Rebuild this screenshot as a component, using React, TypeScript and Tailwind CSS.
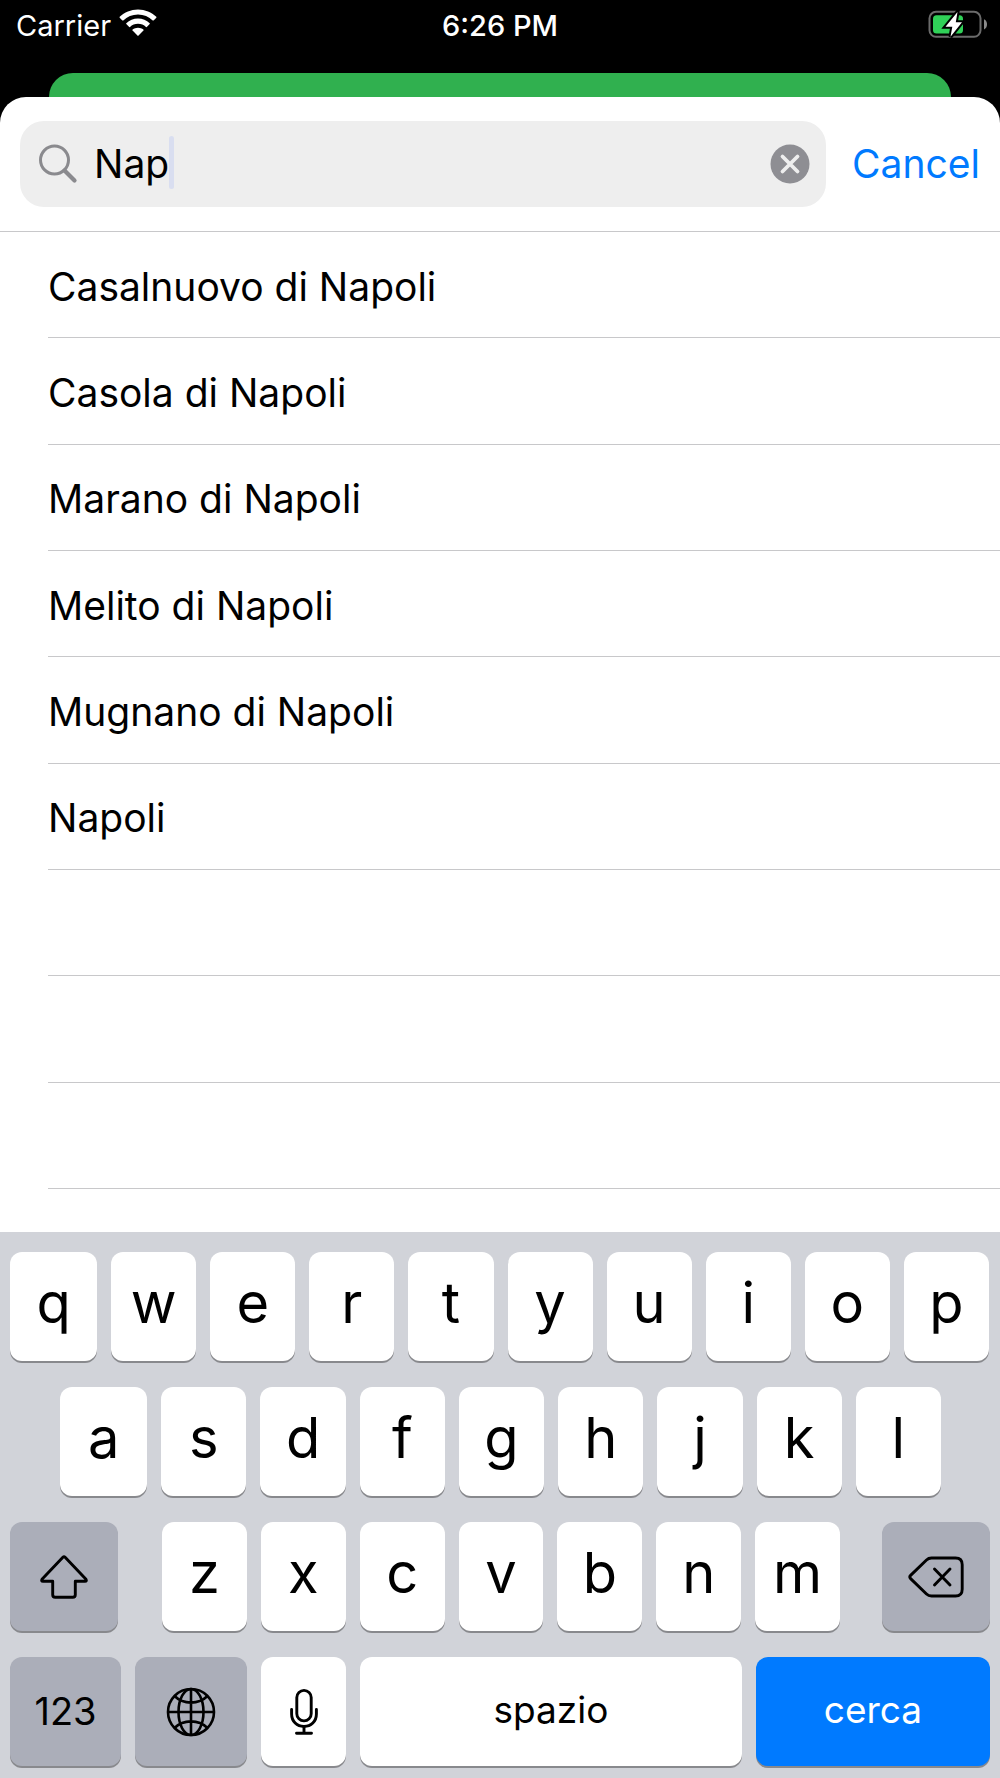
import { useState } from "react";
import type { ReactNode } from "react";

const cities = [
  "Casalnuovo di Napoli",
  "Casola di Napoli",
  "Marano di Napoli",
  "Melito di Napoli",
  "Mugnano di Napoli",
  "Napoli",
  "",
  "",
  "",
];

function WifiIcon() {
  return (
    <svg viewBox="0 0 38 28" className="h-7 w-[38px]" fill="#fff" aria-hidden="true">
      <path d="M19 0.4C11.9 0.4 5.4 3.200 0.700 7.800Q0.300 8.300 0.700 8.700L3.400 11.400Q3.900 11.800 4.300 11.400C8.100 7.700 13.300 5.500 19 5.500S29.900 7.700 33.700 11.400Q34.100 11.800 34.600 11.400L37.300 8.700Q37.700 8.300 37.300 7.800C32.600 3.200 26.100 0.400 19 0.400Z" />
      <path d="M19 9.600C14.500 9.600 10.400 11.400 7.300 14.200Q6.900 14.700 7.300 15.100L10.200 18Q10.600 18.300 11 18C13.100 16 15.900 14.800 19 14.800S24.900 16 27 18Q27.400 18.300 27.800 18L30.700 15.100Q31.100 14.700 30.700 14.200C27.600 11.400 23.500 9.600 19 9.600Z" />
      <path d="M19 18.700C17 18.700 15.100 19.400 13.600 20.600Q13.200 21 13.600 21.500L18.400 26.500Q19 27.100 19.600 26.500L24.400 21.500Q24.800 21 24.400 20.600C22.900 19.400 21 18.700 19 18.700Z" />
    </svg>
  );
}

function BatteryIcon() {
  return (
    <svg viewBox="0 0 60 28" className="h-7 w-[60px]" aria-hidden="true">
      <rect x="1.500" y="1.800" width="51" height="25" rx="6.500" fill="none" stroke="#6b6b6b" strokeWidth="2" />
      <path d="M56 9.200C60 10.800 60 17.800 56 19.400Z" fill="#8a8a8a" />
      <rect x="5" y="5.200" width="30" height="18.200" rx="3.500" fill="#30d158" />
      <path d="M29.500 2L17.500 16.800H24.300L22.500 26.800L34 12.200H27.800Z" fill="#fff" stroke="#000" strokeWidth="4" paintOrder="stroke" />
    </svg>
  );
}

function SearchIcon() {
  return (
    <svg viewBox="0 0 40 40" className="size-10 shrink-0" fill="none" stroke="#8a8a8e" aria-hidden="true">
      <circle cx="16.500" cy="16" r="14" strokeWidth="3" />
      <path d="M26.500 26.500L36.500 36.500" strokeWidth="4.200" strokeLinecap="round" />
    </svg>
  );
}

function ClearIcon() {
  return (
    <svg viewBox="0 0 40 40" className="size-10" aria-hidden="true">
      <circle cx="20" cy="20" r="19.500" fill="#8e8e93" />
      <path d="M12.500 12.500L27.500 27.500M27.500 12.500L12.500 27.500" stroke="#eee" strokeWidth="3.800" strokeLinecap="round" />
    </svg>
  );
}

function ShiftIcon() {
  return (
    <svg viewBox="0 0 48 44" className="h-11 w-12" fill="none" stroke="#000" strokeWidth="2.900" strokeLinejoin="round" aria-hidden="true">
      <path d="M25.100 2.300L46 24.300Q47 26.300 45 26.300H35.300V39.800Q35.300 42.300 32.800 42.300H15.200Q12.700 42.300 12.700 39.800V26.300H3Q1 26.300 2 24.300L22.900 2.300Q24 1.200 25.100 2.300Z" />
    </svg>
  );
}

function DeleteIcon() {
  return (
    <svg viewBox="0 0 56 42" className="h-[42px] w-14" fill="none" stroke="#000" strokeWidth="2.900" strokeLinecap="round" strokeLinejoin="round" aria-hidden="true">
      <path d="M23.500 2H47.500Q54.200 2 54.200 8.700V33.300Q54.200 40 47.500 40H23.500Q20.500 40 18.500 38L2.600 22.600Q1 21 2.600 19.400L18.500 4Q20.500 2 23.500 2Z" />
      <path d="M26.500 13L42 29M42 13L26.500 29" />
    </svg>
  );
}

function GlobeIcon() {
  return (
    <svg viewBox="0 0 50 50" className="size-[50px]" fill="none" stroke="#000" strokeWidth="2.600" aria-hidden="true">
      <circle cx="25" cy="25" r="23" />
      <ellipse cx="25" cy="25" rx="12.500" ry="23" />
      <path d="M25 2V48M2 25H48M8.500 9C17.500 17.800 32.500 17.800 41.500 9M8.500 41C17.500 32.200 32.500 32.200 41.500 41" />
    </svg>
  );
}

function MicIcon() {
  return (
    <svg viewBox="0 0 30 48" className="h-12 w-[30px]" fill="none" stroke="#000" strokeWidth="2.900" strokeLinecap="round" aria-hidden="true">
      <rect x="7.800" y="2.400" width="14.400" height="30.500" rx="7.200" />
      <path d="M2.600 21.500V26C2.600 33.500 8 38.500 15 38.500S27.400 33.500 27.400 26V21.500M15 38.500V45.300M7.500 45.300H22.500" />
    </svg>
  );
}

const keyBase = "flex h-[109px] min-w-0 items-center justify-center rounded-[12px] shadow-[0_2px_0_#88898d]";
const lightKey = "bg-white text-black";
const darkKey = "bg-[#abaeb9] text-black";

function LetterKey({ letter }: { letter: string }) {
  return (
    <button type="button" className={`${keyBase} ${lightKey} pb-2 text-[56px] leading-none`}>
      {letter}
    </button>
  );
}

function IconKey({ label, dark, children }: { label: string; dark?: boolean; children: ReactNode }) {
  return (
    <button type="button" aria-label={label} className={`${keyBase} ${dark ? darkKey : lightKey}`}>
      {children}
    </button>
  );
}

function Letters({ text }: { text: string }) {
  return (
    <>
      {text.split("").map((letter) => (
        <LetterKey key={letter} letter={letter} />
      ))}
    </>
  );
}

function Keyboard() {
  return (
    <section aria-label="Keyboard" className="flex flex-1 flex-col gap-[26px] bg-[#d1d3d9] px-[10px] pt-5 pb-3">
      <div className="grid grid-cols-[87fr_repeat(9,85fr)] gap-[14px] pr-px">
        <Letters text="qwertyuiop" />
      </div>
      <div className="grid grid-cols-[87fr_repeat(8,85fr)] gap-[14px] pr-[49px] pl-[50px]">
        <Letters text="asdfghjkl" />
      </div>
      <div className="grid grid-cols-[108fr_680fr_108fr] gap-[42px]">
        <IconKey label="Shift" dark>
          <ShiftIcon />
        </IconKey>
        <div className="grid grid-cols-7 gap-[14px] pl-0.5">
          <Letters text="zxcvbnm" />
        </div>
        <IconKey label="Delete" dark>
          <DeleteIcon />
        </IconKey>
      </div>
      <div className="grid grid-cols-[111fr_112fr_85fr_382fr_234fr] gap-[14px]">
        <button type="button" className={`${keyBase} ${darkKey} text-[38px]`}>
          123
        </button>
        <IconKey label="Next keyboard" dark>
          <GlobeIcon />
        </IconKey>
        <IconKey label="Dictate">
          <MicIcon />
        </IconKey>
        <button type="button" className={`${keyBase} ${lightKey} pb-1 text-[37px]`}>
          spazio
        </button>
        <button type="button" className={`${keyBase} bg-[#007aff] pb-1 text-[37px] text-white`}>
          cerca
        </button>
      </div>
    </section>
  );
}

export default function App() {
  const [query, setQuery] = useState("Nap");
  return (
    <div className="flex min-h-screen flex-col bg-black font-['Inter','Liberation_Sans',sans-serif] text-black">
      <header className="grid h-[73px] grid-cols-3 items-start px-3 pt-[9px] text-[29px] leading-[34px] text-white">
        <div className="flex items-start gap-2 pl-1">
          <span>Carrier</span>
          <WifiIcon />
        </div>
        <time className="text-center font-medium">6:26 PM</time>
        <div className="flex justify-end pt-px">
          <BatteryIcon />
        </div>
      </header>
      <div className="mx-[49px] h-6 rounded-t-[24px] bg-[#30b04f]" />
      <main className="flex flex-col rounded-t-[26px] bg-white">
        <form
          role="search"
          onSubmit={(event) => event.preventDefault()}
          className="flex items-center border-b border-[#c8c8ca] px-5 py-6"
        >
          <div className="flex h-[86px] flex-1 items-center rounded-[24px] bg-[#eee] pr-4 pl-[18px]">
            <SearchIcon />
            <input
              type="text"
              aria-label="Search"
              value={query}
              onChange={(event) => setQuery(event.target.value)}
              className="ml-4 min-w-0 bg-transparent text-[39px] leading-[52px] caret-transparent outline-none [field-sizing:content]"
            />
            <span className="mb-1 h-[53px] w-[5px] shrink-0 rounded-full bg-[#d9def0]" />
            <button type="button" aria-label="Clear text" onClick={() => setQuery("")} className="ml-auto">
              <ClearIcon />
            </button>
          </div>
          <button type="button" className="ml-[26px] text-[39px] leading-[52px] text-[#007aff]">
            Cancel
          </button>
        </form>
        <ul className="grid h-[957px] auto-rows-fr pl-12">
          {cities.map((city, index) => (
            <li key={index} className="flex items-center border-b border-[#c8c8ca] pt-1 text-[39px] leading-[52px]">
              {city}
            </li>
          ))}
        </ul>
        <div className="h-[43px]" />
      </main>
      <Keyboard />
    </div>
  );
}
